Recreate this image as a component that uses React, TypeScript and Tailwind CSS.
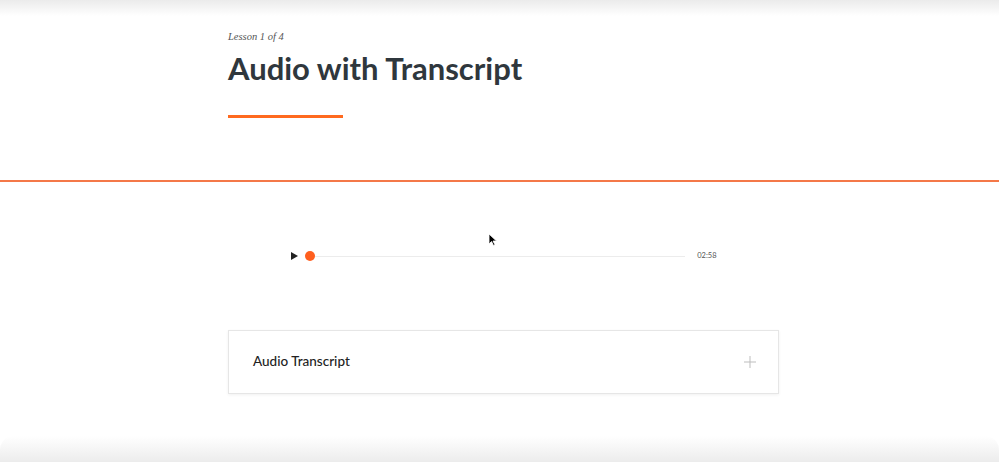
export default function App() {
  return (
    <div className="relative h-[462px] w-full overflow-hidden bg-white flex flex-col" style={{ fontFamily: "Lato, 'Noto Sans', sans-serif" }}>
      <div className="h-[16px] shrink-0 bg-gradient-to-b from-[#ebebeb] to-white" />

      {/* header */}
      <div className="h-[164px] shrink-0 pl-[8px]">
        <div className="mx-auto w-[551px] pt-[14px]">
          <div className="text-[10.5px] leading-[14px] italic text-[#555] font-['Liberation_Serif',serif]">
            Lesson 1 of 4
          </div>
          <h1 className="mt-[4px] text-[31px] leading-[40px] font-bold text-[#2f373d]">
            Audio with Transcript
          </h1>
          <div className="mt-[27px] h-[3px] w-[115px] bg-[#ff6a1f]" />
        </div>
      </div>

      <div className="h-[2px] shrink-0 bg-[#f47848]" />

      {/* body */}
      <div className="pl-[8px]">
        <div className="mx-auto w-[551px]">
          <div className="mt-[69px] flex h-[10px] items-center justify-center">
            <div className="flex w-[426px] items-center">
              <svg width="7" height="8" viewBox="0 0 7 8" className="shrink-0">
                <path d="M0 0 L7 4 L0 8 Z" fill="#222" />
              </svg>
              <div className="relative ml-[7px] flex flex-1 items-center">
                <div className="h-[10px] w-[10px] shrink-0 rounded-full bg-[#ff5f1f]" />
                <div className="h-px flex-1 bg-[#ececec]" />
              </div>
              <span className="ml-[12px] text-[7.5px] text-[#555]">02:58</span>
            </div>
          </div>

          <div className="mt-[69px] flex h-[64px] items-center justify-between border border-[#e6e6e6] pb-[1px] pl-[24px] pr-[22px] shadow-[0_1px_3px_rgba(0,0,0,0.06)]">
            <span className="text-[13.5px] font-medium text-[#222]">Audio Transcript</span>
            <svg width="12" height="12" viewBox="0 0 12 12" className="mt-[1px]">
              <path d="M6 0 V12 M0 6 H12" stroke="#bdbdbd" strokeWidth="1" />
            </svg>
          </div>
        </div>
      </div>

      <div className="mt-auto h-[26px] shrink-0 rounded-t-[14px] bg-gradient-to-b from-white to-[#ececec]" />

      <svg width="10" height="14" viewBox="0 0 10 14" className="absolute left-[488px] top-[233px]">
        <path d="M1 1 L1 11 L3.5 8.5 L5.5 12.5 L7 11.8 L5 8 L8.5 8 Z" fill="#000" stroke="#fff" strokeWidth="0.8" />
      </svg>
    </div>
  );
}
